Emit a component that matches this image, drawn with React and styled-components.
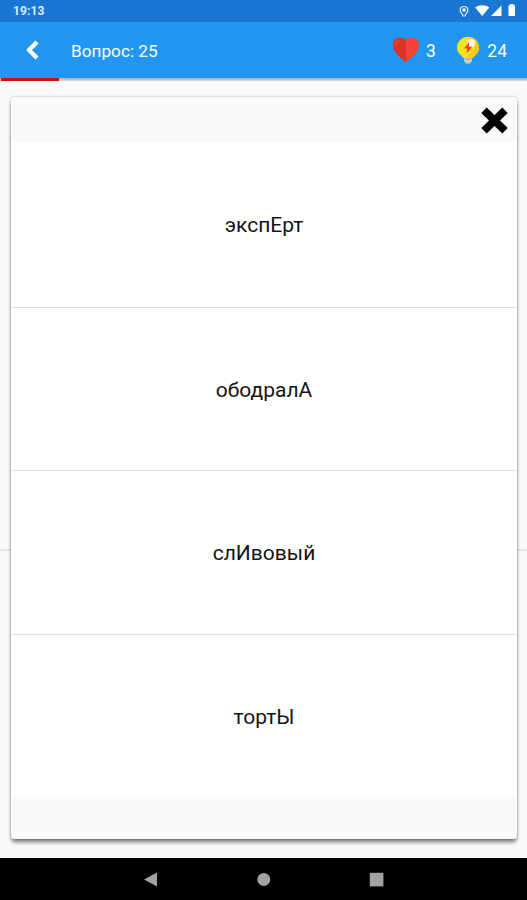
import React from "react";
import styled, { createGlobalStyle } from "styled-components";

const GlobalStyle = createGlobalStyle`
  * { box-sizing: border-box; }
  body { margin: 0; background: #fafafa; font-family: Roboto, "Noto Sans", sans-serif; }
`;

const Screen = styled.div`
  height: 900px;
  display: flex;
  flex-direction: column;
  overflow: hidden;
  background: #fafafa;
`;

const StatusBar = styled.header`
  flex: 0 0 22px;
  display: flex;
  align-items: center;
  justify-content: space-between;
  padding: 0 10px 0 13px;
  background: #1976d2;
  color: #dcebfa;
`;

const Clock = styled.span`
  font-size: 12px;
  font-weight: 700;
  line-height: 22px;
  letter-spacing: 0.1px;
`;

const StatusIcons = styled.svg`
  width: 60px;
  height: 22px;
  fill: #fff;
`;

const AppBar = styled.nav`
  flex: 0 0 56px;
  display: flex;
  align-items: center;
  padding: 0 20px 0 26px;
  background: #2196f3;
  color: #fff;
`;

const BackIcon = styled.svg`
  width: 14px;
  height: 20px;
  fill: none;
  stroke: #fff;
  stroke-width: 4.4;
  stroke-linejoin: round;
`;

const Title = styled.h1`
  flex: 1;
  margin: 0 0 0 31px;
  padding-top: 1px;
  font-size: 17.2px;
  font-weight: 400;
  line-height: 20px;
`;

const Counter = styled.div`
  display: flex;
  align-items: center;
  margin-left: ${(p) => p.$gap}px;
`;

const CounterIcon = styled.svg`
  width: ${(p) => p.$width}px;
  height: 28px;
`;

const CounterValue = styled.span`
  margin-left: ${(p) => p.$offset}px;
  padding-top: 1px;
  font-size: 17.5px;
  line-height: 20px;
`;

const ProgressTrack = styled.div`
  flex: 0 0 3px;
  padding-left: 1px;
  background: linear-gradient(#a9b5bd, #c4c4c4 60%, #e2e2e2);
`;

const ProgressFill = styled.div`
  width: 57.5px;
  height: 3px;
  background: #cc1014;
`;

const Content = styled.main`
  flex: 1;
  padding: 16px 10px 19px 11px;
  background: linear-gradient(#e6e6e6, #e6e6e6) 0 468px / 100% 2px no-repeat #fafafa;
`;

const Card = styled.section`
  height: 742px;
  display: flex;
  flex-direction: column;
  border-radius: 3px;
  background: #fafafa;
  box-shadow: 0 0 2px 1px rgba(0, 0, 0, 0.15), 0 4px 4px -1px rgba(0, 0, 0, 0.52);
`;

const CardHeader = styled.div`
  flex: 0 0 45px;
  display: flex;
  justify-content: flex-end;
  padding: 10px 9px 0 0;
`;

const CloseButton = styled.button`
  width: 28px;
  height: 27px;
  padding: 0;
  border: 0;
  background: none;
`;

const CloseIcon = styled.svg`
  display: block;
  width: 28px;
  height: 27px;
  stroke: #000;
  stroke-width: 7.8;
`;

const Answers = styled.ul`
  flex: 0 0 655px;
  display: grid;
  grid-template-rows: 165.5px 163.5px 163.5px 162.5px;
  margin: 0;
  padding: 0;
  list-style: none;
  background: #fff;
`;

const Answer = styled.li`
  display: flex;
  align-items: center;
  justify-content: center;
  padding-top: 2px;
  border-bottom: 1px solid #e2e2e2;
  color: #141414;
  font-size: 21px;
  line-height: 24px;

  &:last-child { border-bottom: 0; }
`;

const SystemNav = styled.footer`
  flex: 0 0 42px;
  display: flex;
  align-items: center;
  justify-content: center;
  gap: 98px;
  background: #000;
`;

const NavIcon = styled.svg`
  width: 15px;
  height: 16px;
  fill: #a2a2a2;
`;

const answers = ["экспЕрт", "ободралА", "слИвовый", "тортЫ"];

function Heart() {
  return (
    <CounterIcon $width={28} viewBox="0 0 28 28">
      <path d="M14 26.2C10.5 23.2 1 17 1 9C1 4.6 3.8 1.8 7.8 1.8C10.8 1.8 13 3 14 4.6C15 3 17.2 1.8 20.2 1.8C24.2 1.8 27 4.6 27 9C27 17 17.5 23.2 14 26.2Z" fill="#f44336" />
      <path d="M14 26.2C10.5 23.2 1 17 1 9C1 4.6 3.8 1.8 7.8 1.8C10.8 1.8 13 3 14 4.6Z" fill="#d9342c" />
      <path d="M3.5 9.5C3.5 7 5 5 7.5 4.7" fill="none" stroke="#e84a40" strokeWidth="1.3" strokeLinecap="round" />
    </CounterIcon>
  );
}

function Bulb() {
  return (
    <CounterIcon $width={24} viewBox="0 0 24 28">
      <path d="M8 20H16V25L14 27.5H10L8 25Z" fill="#c7d1d3" />
      <path d="M8.5 23H15.5" stroke="#8fa3aa" />
      <path d="M12 .7C5.8 .7 1 5.6 1 11.8C1 16.7 4.5 18.8 7.5 22H16.5C19.5 18.8 23 16.7 23 11.8C23 5.6 18.2 .7 12 .7Z" fill="#f9e31a" />
      <path d="M12 .7C18.2 .7 23 5.6 23 11.8C23 16.7 19.5 18.8 16.5 22H12V19C16 17 19 13 18 7Z" fill="#f7cb12" />
      <circle cx="15" cy="7.3" r="4.4" fill="#fff9df" />
      <path d="M13.2 6L8 12.6L11.4 12.6L10.4 17.8L16.4 10.6L12.7 10.7Z" fill="#ee3f24" />
    </CounterIcon>
  );
}

export default function App() {
  return (
    <>
      <GlobalStyle />
      <Screen>
        <StatusBar>
          <Clock>19:13</Clock>
          <StatusIcons viewBox="457 0 60 22">
            <path d="M464 6.5C461.8 6.5 460.2 8 460.2 10C460.2 12.4 462.4 13.5 463 16H465C465.6 13.5 467.8 12.4 467.8 10C467.8 8 466.2 6.5 464 6.5Z" fill="none" stroke="#dcecfb" strokeWidth="1.2" />
            <circle cx="464" cy="10" r="1.7" />
            <path d="M475.2 7.5C479 4.4 485.5 4.4 489.3 7.5L482.2 16Z" />
            <path d="M501.5 5.5V16H491Z" />
            <path d="M510 4H513.5V5.2H515V16H508.5V5.2H510Z" />
          </StatusIcons>
        </StatusBar>
        <AppBar>
          <BackIcon viewBox="0 0 14 20"><path d="M11 2L3 10L11 18" /></BackIcon>
          <Title>Вопрос: 25</Title>
          <Counter $gap={0}><Heart /><CounterValue $offset={5.5}>3</CounterValue></Counter>
          <Counter $gap={20.5}><Bulb /><CounterValue $offset={7}>24</CounterValue></Counter>
        </AppBar>
        <ProgressTrack><ProgressFill /></ProgressTrack>
        <Content>
          <Card>
            <CardHeader>
              <CloseButton aria-label="Закрыть">
                <CloseIcon viewBox="0 0 28 27"><path d="M4 3.2L25 23.8M25 3.2L4 23.8" /></CloseIcon>
              </CloseButton>
            </CardHeader>
            <Answers>
              {answers.map((text) => <Answer key={text}>{text}</Answer>)}
            </Answers>
          </Card>
        </Content>
        <SystemNav>
          <NavIcon viewBox="0 0 15 16"><path d="M14 1.5V15.5L1 8.5Z" /></NavIcon>
          <NavIcon viewBox="0 0 15 16"><circle cx="7.8" cy="8.5" r="6.5" /></NavIcon>
          <NavIcon viewBox="0 0 15 16"><path d="M.8 1.8H14.4V15.4H.8Z" /></NavIcon>
        </SystemNav>
      </Screen>
    </>
  );
}
